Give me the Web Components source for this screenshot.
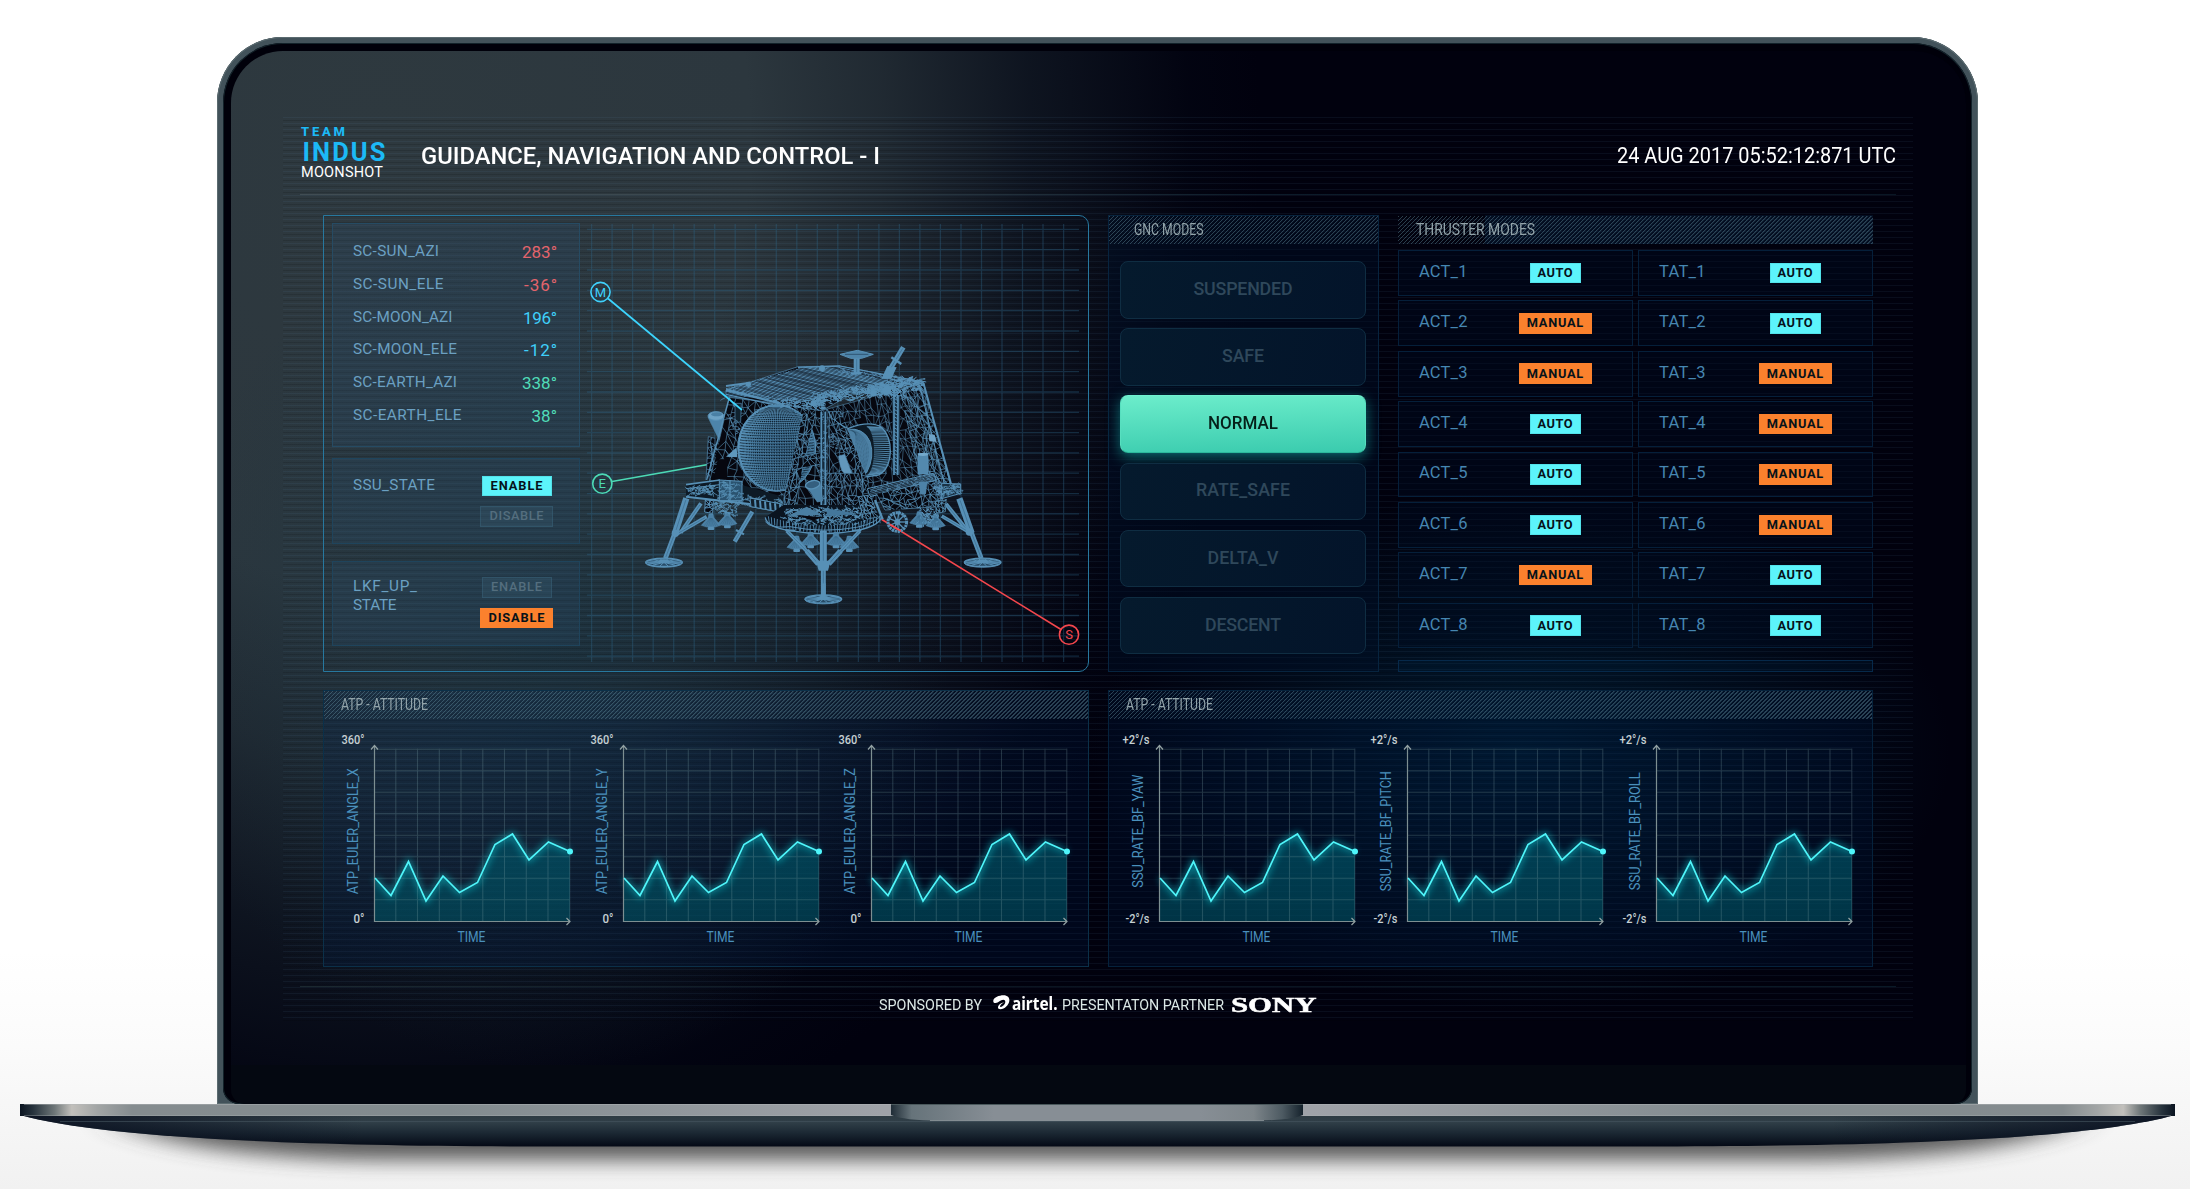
<!DOCTYPE html>
<html lang="en">
<head>
<meta charset="utf-8">
<title>Team Indus Moonshot - GNC</title>
<style>
  html, body { margin: 0; padding: 0; }
  body { width: 2190px; height: 1189px; overflow: hidden; font-family: Roboto, "Liberation Sans", sans-serif; background: linear-gradient(#fff 0 80%, #fbfbfb 88%, #f6f6f6 94%, #f1f1f1 100%); }
</style>
</head>
<body>
<laptop-mockup><gnc-dashboard></gnc-dashboard></laptop-mockup>
<script>
const define = (name, html, setup) => {
  customElements.define(name, class extends HTMLElement {
    constructor() { super(); this.attachShadow({ mode: 'open' }); }
    connectedCallback() {
      if (this.ready) return;
      this.ready = true;
      this.shadowRoot.innerHTML = typeof html === 'function' ? html(this) : html;
      if (setup) setup(this);
    }
  });
};

/* Text run stretched to an exact length: attribute w is the length in px. */
const runs = new Set();
define('fit-text', el => `<style>
  :host { display: inline-block; white-space: nowrap; width: ${el.getAttribute('w')}px; flex: none; }
  span { display: inline-block; transform-origin: 0 50%; }
</style><span><slot></slot></span>`, el => runs.add(el));
const fitAll = () => runs.forEach(el => {
  const span = el.shadowRoot.querySelector('span');
  const want = +el.getAttribute('w'), have = span.getBoundingClientRect().width;
  const n = el.textContent.trim().length;
  if (want / have < 0.97) span.style.transform = `scaleX(${want / have})`;
  else span.style.letterSpacing = (want - have) / (n - 1) + 'px';
});

/* ---------- laptop body ---------- */
define('laptop-mockup', `<style>
  :host { display: flex; flex-direction: column; width: 2190px; height: 1189px; box-sizing: border-box; padding-top: 37px; }
  .lid { flex: none; width: 1761px; height: 1067px; margin-left: 217px; box-sizing: border-box; padding: 6px 6px 0;
    border-radius: 66px 66px 0 0; background: #42525a; box-shadow: inset 0 0 0 1px #5b6b70, inset 0 0 0 5px #42525a; display: flex; }
  .bezel { flex: 1; box-sizing: border-box; display: flex; flex-direction: column; padding: 8px 6px 0 8px; background: #00000a;
    border-radius: 60px 60px 16px 16px; box-shadow: inset 0 0 0 1px #12222a; overflow: hidden; }
  .glass { height: 1014px; border-radius: 52px 52px 0 0; overflow: hidden; display: flex; }
  .chin { flex: 1; background: #040811; border-radius: 0 0 14px 14px; }
  svg { display: block; flex: none; }
</style>
<div class="lid"><div class="bezel"><div class="glass"><slot></slot></div><div class="chin"></div></div></div>
<svg width="2190" height="85" viewBox="0 1104 2190 85">
  <defs>
    <linearGradient id="bar" x1="20" x2="2175" y1="0" y2="0" gradientUnits="userSpaceOnUse">
      <stop offset="0" stop-color="#0a1420"/><stop offset=".006" stop-color="#26323c"/><stop offset=".016" stop-color="#6e7678"/>
      <stop offset=".024" stop-color="#c2c0bc"/><stop offset=".036" stop-color="#a2a5a5"/><stop offset=".052" stop-color="#858c8f"/>
      <stop offset=".2" stop-color="#828b8f"/><stop offset=".4" stop-color="#9fa2a8"/><stop offset=".6" stop-color="#9fa2a8"/>
      <stop offset=".8" stop-color="#828b8f"/><stop offset=".948" stop-color="#858c8f"/><stop offset=".964" stop-color="#a2a5a5"/>
      <stop offset=".976" stop-color="#c2c0bc"/><stop offset=".984" stop-color="#6e7678"/><stop offset=".994" stop-color="#26323c"/><stop offset="1" stop-color="#0a1420"/>
    </linearGradient>
    <linearGradient id="under" x1="0" x2="0" y1="1116" y2="1147" gradientUnits="userSpaceOnUse">
      <stop offset="0" stop-color="#2e3b43"/><stop offset=".2" stop-color="#303f48"/><stop offset=".55" stop-color="#1b2833"/><stop offset="1" stop-color="#030814"/>
    </linearGradient>
    <linearGradient id="ends" x1="20" x2="2175" y1="0" y2="0" gradientUnits="userSpaceOnUse">
      <stop offset="0" stop-color="#060c1c" stop-opacity=".85"/><stop offset=".16" stop-color="#060c1c" stop-opacity="0"/>
      <stop offset=".84" stop-color="#060c1c" stop-opacity="0"/><stop offset="1" stop-color="#060c1c" stop-opacity=".85"/>
    </linearGradient>
    <linearGradient id="notch"><stop offset="0" stop-color="#1f2c36"/><stop offset=".05" stop-color="#66737a"/><stop offset=".25" stop-color="#878e95"/>
      <stop offset=".75" stop-color="#878e95"/><stop offset=".88" stop-color="#7d858a"/><stop offset=".95" stop-color="#4d5a62"/><stop offset="1" stop-color="#15222c"/></linearGradient>
    <filter id="soft" x="-10%" width="120%" y="-100%" height="300%"><feGaussianBlur stdDeviation="20 10"/></filter>
  </defs>
  <path d="M110 1118 H2085 Q2010 1157 1820 1160 H375 Q180 1157 110 1118Z" fill="#4a4a4a" opacity=".9" filter="url(#soft)"/>
  <path d="M20 1115 H2175 C2100 1136 1930 1146.500 1640 1146.500 H550 C270 1146.500 95 1136 20 1115Z" fill="url(#under)"/>
  <path d="M20 1115 H2175 C2100 1136 1930 1146.500 1640 1146.500 H550 C270 1146.500 95 1136 20 1115Z" fill="url(#ends)"/>
  <path d="M60 1121.500H2135" stroke="#465660" stroke-width="1" opacity=".6"/>
  <rect x="20" y="1104" width="2155" height="12" fill="url(#bar)"/>
  <path d="M24 1104.500H2171" stroke="#b4b8ba" opacity=".45"/><path d="M24 1115.500H2171" stroke="#aeb4b6" opacity=".35"/>
  <path d="M891 1104 H1303 V1115 Q1290 1120.500 1255 1120.500 H939 Q904 1120.500 891 1115Z" fill="url(#notch)"/>
  <path d="M930 1120.500H1264" stroke="#a5adb0" opacity=".6"/><path d="M891 1104.500H1303" stroke="#4a585c"/>
</svg>`);

/* ---------- dashboard shell ---------- */
define('gnc-dashboard', `<style>
  :host { position: relative; isolation: isolate; display: flex; flex-direction: column; width: 1735px; height: 1014px; box-sizing: border-box; padding: 66px 70px 0 69px; color: #fff;
    background:
      radial-gradient(400px 430px at 320px 590px, rgba(18,52,70,.42), rgba(16,54,72,0)),
      radial-gradient(430px 260px at 1290px 700px, rgba(0,46,72,.55), rgba(0,30,50,0)),
      radial-gradient(880px 1070px at 150px 90px, #2e393f 0, #2c373e 42%, rgba(35,45,53,.92) 57%, rgba(20,29,40,.68) 74%, rgba(5,11,25,.26) 92%, rgba(0,0,12,0) 100%),
      #01010e; }
  .rule { height: 1px; background: linear-gradient(90deg, #414d53, #3a474e 25%, #0d1c2a 60%, #0a1724); }
  header { height: 77px; display: flex; align-items: center; }
  .title { font-size: 24.500px; font-weight: 500; flex: 1; padding-left: .5px; }
  .date { font-size: 21.500px; }
  main { display: grid; grid-template: 457px 277px / 765.500px 765px; gap: 18px 19px; padding: 20px 24px 0 23px; }
  .pair { display: flex; gap: 19px; }
  gnc-modes { width: 271px; } thruster-modes { flex: 1; }
  .rule.low { margin-top: 19px; background: linear-gradient(90deg, #1c2930, #132029 20%, #0a1420 50%, #0a1a27); }
  .scan { position: absolute; z-index: -1; left: 52px; top: 66px; width: 1630px; height: 905px; pointer-events: none;
    background: repeating-linear-gradient(180deg, rgba(90,140,180,.085) 0 1px, transparent 1px 3px, rgba(0,0,0,.13) 3px 4px, transparent 4px 6px); }
</style>
<div class="scan"></div>
<header><team-logo></team-logo><div class="title"><fit-text w="459">GUIDANCE, NAVIGATION AND CONTROL - I</fit-text></div>
<div class="date"><fit-text w="279">24 AUG 2017 05:52:12:871 UTC</fit-text></div></header>
<div class="rule"></div>
<main>
  <attitude-view></attitude-view>
  <div class="pair"><gnc-modes></gnc-modes><thruster-modes></thruster-modes></div>
  <chart-panel data-kind="euler"></chart-panel>
  <chart-panel data-kind="rate"></chart-panel>
</main>
<div class="rule low"></div>
<sponsor-bar></sponsor-bar>`);

define('team-logo', `<style>
  :host { display: flex; flex-direction: column; align-self: flex-start; width: 120px; margin-top: 6px; padding-left: 1px; box-sizing: border-box; color: #1cb9f6; }
  .a { font: 800 13px/17px Roboto, sans-serif; height: 18px; } .b { font: 700 25.500px/22px Roboto, sans-serif; padding-left: 1.500px; height: 22px; } .c { font: 400 14.500px/20px Roboto, sans-serif; color: #fff; height: 20px; }
</style><div class="a"><fit-text w="44">TEAM</fit-text></div><div class="b"><fit-text w="83">INDUS</fit-text></div><div class="c"><fit-text w="82">MOONSHOT</fit-text></div>`);

/* ---------- shared parts ---------- */
define('state-badge', el => `<style>
  :host { display: inline-flex; align-items: center; justify-content: center; box-sizing: border-box; height: 20.500px; width: ${el.dataset.w}px; font-size: 12.800px; font-weight: 700; line-height: 20px; color: #06121a; flex: none; }
  :host([tone=cyan]) { background: #5cf4fb; box-shadow: inset 0 0 0 1px #52e2ea; }
  :host([tone=orange]) { background: #fb812d; }
  :host([tone=off]) { background: rgba(60,100,125,.26); box-shadow: inset 0 0 0 1px rgba(60,105,130,.4); color: #546e7e; font-weight: 500; }
</style><fit-text w="${el.dataset.t}">${el.textContent}</fit-text>`);

define('panel-title', `<style>
  :host { display: flex; align-items: center; height: 28px; box-sizing: border-box; font-size: 16px; line-height: 28px; color: #93a4aa;
    background: repeating-linear-gradient(135deg, rgba(100,145,160,.42) 0 1.100px, transparent 1.400px 2.830px); }
</style><slot></slot>`);

/* ---------- attitude / lander ---------- */
const readings = [['SC-SUN_AZI', 86, '283°', 35, '#e4646c'], ['SC-SUN_ELE', 90.5, '-36°', 33, '#e4646c'], ['SC-MOON_AZI', 99.5, '196°', 34, '#3fd0fb'],
  ['SC-MOON_ELE', 104, '-12°', 33, '#3fd0fb'], ['SC-EARTH_AZI', 104, '338°', 35, '#50dcb8'], ['SC-EARTH_ELE', 108.5, '38°', 25.5, '#50dcb8']];
define('attitude-view', `<style>
  :host { display: flex; box-sizing: border-box; border: 1px solid #27789f; border-radius: 0 10px 10px 0; width: 765.500px; height: 457px; padding: 7px 0 0 8px; }
  .side { width: 248px; display: flex; flex-direction: column; color: #6ba0c2; font-size: 15.300px; flex: none; }
  .card { box-sizing: border-box; border: 1px solid #264b63; background: rgba(44,76,108,.26); }
  .read { height: 224px; padding: 11px 22px 0 20px; }
  .row { height: 32.800px; line-height: 32.800px; display: flex; justify-content: space-between; }
  .val { font-size: 17px; line-height: 34px; }
  .state { height: 86px; padding: 16px 0 0 20px; display: flex; border-color: #1f445c; line-height: 19.300px; }
  .state + .state { margin-top: 17px; height: 85px; padding-top: 15px; }
  .read + .state { margin-top: 11px; padding-top: 16.500px; }
  .lbl { width: 123.500px; display: flex; flex-direction: column; }
  .opts { width: 80px; display: flex; flex-direction: column; gap: 10px; align-items: center; }
</style>
<div class="side">
  <div class="card read">${readings.map(r => `<div class="row"><fit-text w="${r[1]}">${r[0]}</fit-text><fit-text class="val" w="${r[3]}" style="color:${r[4]}">${r[2]}</fit-text></div>`).join('')}</div>
  <div class="card state"><div class="lbl"><fit-text w="82">SSU_STATE</fit-text></div><div class="opts"><state-badge tone="cyan" data-w="70" data-t="52">ENABLE</state-badge><state-badge tone="off" data-w="73" data-t="54">DISABLE</state-badge></div></div>
  <div class="card state"><div class="lbl"><fit-text w="64">LKF_UP_</fit-text><fit-text w="43.500">STATE</fit-text></div><div class="opts"><state-badge tone="off" data-w="70" data-t="51">ENABLE</state-badge><state-badge tone="orange" data-w="73" data-t="56">DISABLE</state-badge></div></div>
</div>
<lander-scene></lander-scene>`);

function landerMarkup() {
  let seed = 11;
  const rnd = () => (seed = (seed * 16807) % 2147483647) / 2147483647;
  const f = n => n.toFixed(1);
  const C = '#5790b6', D = '#06070f';
  let out = '';
  const poly = (pts, fill = D, stroke = 'none', sw = 1, extra = '') => out += `<polygon points="${pts.map(p => p.join()).join(' ')}" fill="${fill}" stroke="${stroke}" stroke-width="${sw}" ${extra}/>`;
  const line = (a, b, w = 3, c = C) => out += `<path d="M${f(a[0])} ${f(a[1])}L${f(b[0])} ${f(b[1])}" stroke="${c}" stroke-width="${w}"/>`;
  const lerp = (a, b, t) => [a[0] + (b[0] - a[0]) * t, a[1] + (b[1] - a[1]) * t];
  /* triangulated quad a-b-c-d, clockwise from top left */
  const mesh = (a, b, c, d, nu, nv, w = 2, keep = .85, fill = D) => {
    if (fill) poly([a, b, c, d], fill);
    const P = [];
    for (let j = 0; j <= nv; j++) { P[j] = []; for (let i = 0; i <= nu; i++) {
      const p = lerp(lerp(a, b, i / nu), lerp(d, c, i / nu), j / nv);
      const inner = i && j && i < nu && j < nv ? 1 : 0;
      P[j][i] = [p[0] + (rnd() - .5) * 9 * inner, p[1] + (rnd() - .5) * 14 * inner]; } }
    let dd = '';
    const seg = (p, q) => { if (rnd() < keep) dd += `M${f(p[0])} ${f(p[1])}L${f(q[0])} ${f(q[1])}`; };
    for (let j = 0; j <= nv; j++) for (let i = 0; i <= nu; i++) {
      if (i < nu) seg(P[j][i], P[j][i + 1]);
      if (j < nv) seg(P[j][i], P[j + 1][i]);
      if (i < nu && j < nv) { rnd() < .6 ? seg(P[j][i], P[j + 1][i + 1]) : seg(P[j][i + 1], P[j + 1][i]); if (rnd() < .22) seg(P[j][i], [P[j+1][i+1][0] - 5, P[j+1][i+1][1]]); }
    }
    out += `<path d="${dd}" stroke="${C}" stroke-width="${w}" fill="none"/>`;
  };
  const fuzz = (a, b, spread, n, w = 2) => { let dd = '';
    for (let i = 0; i < n; i++) { const p = lerp(a, b, rnd()); const x = p[0], y = p[1] + (rnd() - .5) * spread; dd += `M${f(x)} ${f(y)}l${f((rnd() - .5) * 26)} ${f((rnd() - .5) * 12)}l${f((rnd() - .5) * 14)} ${f((rnd() - .5) * 12)}`; }
    out += `<path d="${dd}" stroke="${C}" stroke-width="${w}" fill="none"/>`; };
  const tube = (a, b, w) => { line(a, b, w); line(lerp(a, b, .05), lerp(a, b, .95), 1.5, '#2f5e80'); };
  const joint = (x, y, r = 7) => out += `<circle cx="${x}" cy="${y}" r="${r}" fill="${C}"/>`;
  const foot = (x, y) => { out += `<ellipse cx="${x}" cy="${y}" rx="55" ry="12.500" fill="#274b66" stroke="${C}" stroke-width="4"/>`;
    for (let i = 0; i < 14; i++) { const t = i / 14 * 6.283; line([x, y], [x + 53 * Math.cos(t), y + 11 * Math.sin(t)], 3); }
    out += `<ellipse cx="${x}" cy="${y + 2}" rx="55" ry="12.500" fill="none" stroke="${C}" stroke-width="3"/><ellipse cx="${x}" cy="${y-3}" rx="18" ry="6" fill="${C}"/>`; };
  const nozzle = (x, y, s = 1) => { out += `<path d="M${x - 6 * s} ${y - 30 * s}h${12 * s}l${3 * s} ${12 * s}q${8 * s} ${8 * s} ${20 * s} ${22 * s}q${-29 * s} ${12 * s} ${-58 * s} 0q${12 * s} ${-14 * s} ${20 * s} ${-22 * s}z" fill="#4a7fa4" stroke="${C}" stroke-width="1.500"/><rect x="${x - 10 * s}" y="${y + 9 * s}" width="${20 * s}" height="${9 * s}" rx="3" fill="${C}"/>`;
    for (let k = -3; k <= 3; k++) line([x + k, y - 18 * s], [x + k * 7 * s, y + 6 * s], 1, '#2d5a7a'); };

  /* rear nozzles, booms and legs */
  nozzle(213, 552); nozzle(262, 547); nozzle(838, 545); nozzle(887, 553);
  tube([337, 515], [284, 605], 13); line([288, 570], [312, 583], 6);
  tube([183, 490], [122, 578], 12); tube([200, 530], [100, 588], 11);
  tube([139, 475], [105, 580], 19); tube([108, 570], [76, 655], 14); joint(106, 580, 11);
  tube([918, 492], [985, 575], 12); tube([905, 528], [990, 578], 11);
  tube([958, 475], [995, 580], 19); tube([992, 572], [1024, 655], 14); joint(988, 576, 11);
  foot(72, 667); foot(1028, 667);
  /* left sensor */
  poly([[204, 232], [250, 232], [246, 300], [238, 300]], '#4d84aa', C, 1.5);
  out += `<ellipse cx="228" cy="228" rx="24" ry="13" fill="#6da2c5" stroke="${C}" stroke-width="3"/><ellipse cx="230" cy="223" rx="17" ry="6" fill="#4a80a5"/>`;
  /* main hull */
  mesh([205, 290], [245, 300], [240, 430], [198, 420], 4, 8, 2);
  mesh([268, 172], [545, 212], [545, 505], [205, 440], 14, 12, 1.8, .75);
  mesh([545, 212], [850, 128], [936, 450], [545, 515], 19, 11, 1.6, .85);
  mesh([780, 150], [850, 128], [936, 450], [850, 460], 5, 10, 2.2, .95, null);
  line([268, 172], [200, 420], 4); line([850, 128], [938, 450], 6); line([838, 135], [915, 440], 3);
  poly([[285, 190], [304, 190], [302, 245], [285, 250]], '#10222f', C, 2);
  poly([[233, 358], [262, 358], [262, 420], [222, 416]], D);
  poly([[258, 350], [290, 322], [292, 352]], '#5f98bd');
  poly([[866, 282], [884, 284], [890, 306], [868, 304]], '#6ea2c6');
  /* propellant sphere */
  out += `<defs><radialGradient id="ball" cx=".62" cy=".55" r=".62"><stop offset="0" stop-color="#2e5776"/><stop offset=".62" stop-color="#3b6b8d"/><stop offset=".9" stop-color="#5089af"/><stop offset="1" stop-color="#5a94bb"/></radialGradient></defs>
    <ellipse cx="410" cy="324" rx="117" ry="130" fill="url(#ball)" stroke="${C}" stroke-width="3"/>`;
  let dots = '', lights = '';
  for (let j = -22; j <= 22; j++) for (let i = -21; i <= 21; i++) {
    const v = j / 22.5 * 1.5, u = i / 21.5 * 1.45;
    const x = 410 + 113 * Math.sin(u) * Math.cos(v * .8), y = 324 + 127 * Math.sin(v) + 6 * Math.cos(u);
    const r = 2.2 * Math.cos(u) * Math.cos(v) + .4;
    if (((x - 410) / 113) ** 2 + ((y - 324) / 127) ** 2 > .97) continue;
    dots += `M${f(x - r)} ${f(y)}h${f(2 * r)}`; lights += `M${f(x + r)} ${f(y + 2.2)}h${f(1.5 * r)}`;
  }
  out += `<path d="${dots}" stroke="#07121d" stroke-width="2.800"/><path d="${lights}" stroke="#6fa5c9" stroke-width="1.600"/>`;
  /* side drum with its dome */
  out += `<path d="M625 265Q690 240 725 262Q752 290 751 335Q748 390 715 405L650 415Z" fill="#0c1a26" stroke="${C}" stroke-width="4"/>`;
  for (let i = 0; i < 34; i++) { const t = -1.4 + i / 33 * 2.8; line([676 + 26 * Math.cos(t), 333 + 74 * Math.sin(t)], [718 + 32 * Math.cos(t), 331 + 70 * Math.sin(t)], 2.6); }
  out += `<path d="M622 268Q672 262 690 305Q705 350 680 398L650 405Z" fill="#4c80a4" stroke="${C}" stroke-width="3"/>`;
  for (let i = 1; i < 9; i++) out += `<path d="M${622 + i * 3} ${268 + i}Q${672 - i * 3} ${270 + i * 3} ${688 - i * 5} ${318}Q${695 - i * 5} 355 ${672 - i * 2} 398" fill="none" stroke="#1c3a52" stroke-width="1.200" stroke-dasharray="2 2"/>`;
  out += `<path d="M596 348L627 340L650 412Q620 412 606 392Q598 372 596 348Z" fill="#6297bb" stroke="${C}" stroke-width="2"/>`;
  /* frame straps over the sphere */
  mesh([488, 222], [526, 222], [462, 500], [428, 492], 3, 14, 2.2, .9);
  mesh([566, 215], [602, 215], [686, 425], [662, 470], 3, 13, 2.2, .9);
  mesh([560, 400], [655, 400], [680, 520], [560, 520], 7, 6, 2, .85);
  mesh([462, 356], [542, 338], [542, 372], [456, 390], 6, 2, 2.2);
  out += `<rect x="540" y="215" width="20" height="300" fill="#15293a"/>`;
  line([544, 215], [544, 520], 5); line([556, 215], [556, 515], 5); fuzz([550, 220], [550, 510], 12, 50, 2);
  line([568, 215], [568, 505], 2);
  poly([[757, 165], [781, 165], [778, 405], [758, 405]], '#1a3347'); line([762, 165], [762, 405], 5); line([774, 165], [773, 405], 5);
  for (let y = 175; y < 400; y += 11) line([762, y], [774, y + 7], 3);
  /* bracket clutter */
  fuzz([575, 300], [620, 330], 40, 24); fuzz([255, 200], [300, 300], 60, 20); fuzz([470, 300], [540, 300], 50, 18);
  poly([[498, 436], [540, 432], [548, 482], [532, 486]], '#4b80a4', C, 2);
  out += `<ellipse cx="518" cy="434" rx="22" ry="12" transform="rotate(-12 518 434)" fill="#345f7f" stroke="${C}" stroke-width="4"/>`;
  /* roof */
  poly([[258, 150], [474, 80], [600, 78], [850, 126], [640, 160], [545, 212], [420, 192], [258, 168]], '#0a0d16', C, 2);
  out += `<clipPath id="roof"><path d="M258 140L474 80L600 78L850 126L520 190L258 165Z"/></clipPath><g clip-path="url(#roof)">`;
  for (let i = 0; i < 42; i++) { const t = i / 42; const a = lerp([235, 152], [560, 62], t), b = lerp([430, 205], [870, 132], t); line(a, lerp(a, b, .8 + rnd() * .3), 1.2 + rnd() * 2.2); }
  out += `</g>`;
  line([258, 138], [330, 128], 6); line([258, 150], [420, 190], 7); line([258, 163], [400, 194], 4); fuzz([270, 150], [420, 185], 18, 34);
  fuzz([410, 188], [560, 195], 24, 130, 3); fuzz([520, 178], [850, 132], 34, 330, 3); fuzz([530, 172], [820, 120], 22, 150, 3); fuzz([690, 155], [800, 160], 24, 80, 3);
  line([474, 82], [600, 78], 4); line([600, 78], [850, 126], 3);
  joint(325, 133, 8); joint(546, 85, 9); joint(740, 152, 13); joint(700, 160, 9); joint(520, 190, 9); joint(808, 120, 6);
  fuzz([600, 95], [840, 125], 18, 70, 2);
  /* antenna and boom */
  poly([[600, 43], [652, 31], [700, 43], [665, 55], [632, 55]], '#4e84a9', C, 3); line([615, 43], [685, 43], 2, '#1f4059');
  tube([650, 55], [650, 100], 18); line([632, 100], [664, 100], 7);
  poly([[742, 78], [770, 82], [754, 116], [724, 116]], C); tube([752, 85], [790, 22], 15); line([754, 52], [784, 72], 7);
  /* deck */
  poly([[138, 434], [245, 418], [430, 470], [430, 515], [340, 505], [330, 490], [150, 470], [138, 470]], '#0d1a26');
  line([138, 434], [240, 420], 5); line([138, 446], [240, 434], 3); line([138, 470], [330, 492], 6); line([330, 474], [440, 500], 6); line([335, 500], [430, 518], 4);
  fuzz([145, 455], [230, 448], 26, 80, 2.4); fuzz([240, 475], [430, 495], 30, 120, 2.4);
  poly([[238, 420], [306, 424], [306, 482], [238, 482]], '#2b5370', C, 3); fuzz([244, 450], [300, 455], 50, 60, 2.4); line([270, 420], [270, 482], 4);
  poly([[330, 474], [425, 492], [430, 518], [333, 500]], '#111f2c', C, 3); for (let x = 345; x < 425; x += 15) line([x, 478 + (x - 340) * .18], [x + 2, 502 + (x - 340) * .18], 6);
  mesh([196, 480], [220, 482], [218, 520], [194, 516], 2, 3, 3);
  poly([[682, 446], [880, 400], [888, 420], [690, 470]], '#0a1018', C, 3); for (let i = 0; i < 5; i++) line([690, 450 + i * 5], [880, 403 + i * 4], 2); fuzz([690, 455], [880, 412], 18, 40, 2);
  mesh([710, 462], [880, 425], [900, 500], [735, 510], 10, 4, 2.2);
  poly([[905, 430], [962, 432], [962, 460], [905, 476]], '#1a3245', C, 3); fuzz([905, 450], [958, 446], 30, 60, 2.4);
  fuzz([880, 420], [910, 500], 40, 60);
  out += `<rect x="834" y="340" width="30" height="62" fill="#5389ae" stroke="${C}" stroke-width="2"/><path d="M836 425h26l-4 36q-9 6-18 0z" fill="#4d82a7"/><ellipse cx="849" cy="343" rx="15" ry="5" fill="#74a9cc"/>`;
  mesh([885, 485], [918, 480], [916, 515], [890, 520], 3, 3, 2.5);
  /* lower ring */
  poly([[430, 495], [690, 495], [725, 530], [722, 552], [640, 575], [550, 582], [450, 572], [378, 550], [376, 532]], '#0a1420');
  out += `<path d="M376 532Q378 560 450 572Q550 590 650 572Q722 556 724 530" fill="none" stroke="${C}" stroke-width="4"/><path d="M376 545Q390 566 450 560Q550 580 650 562Q716 548 724 520" fill="none" stroke="${C}" stroke-width="3"/>`;
  for (let x = 385; x < 720; x += 9) { const y = 582 - Math.abs(x - 550) ** 2 / 1000; line([x, y - 26], [x + (rnd() - .5) * 8, y - 4], 2.6); }
  fuzz([435, 525], [680, 522], 40, 260, 2.8); fuzz([440, 545], [660, 545], 20, 60, 2.4);
  poly([[470, 515], [500, 500], [545, 525], [440, 528]], '#4a7ea2'); poly([[560, 505], [655, 522], [560, 528]], '#44779b'); poly([[470, 525], [545, 532], [520, 542]], D);
  mesh([655, 470], [690, 465], [715, 530], [670, 540], 4, 5, 2.6);
  line([705, 480], [728, 538], 7);
  /* centre nozzles and leg */
  nozzle(470, 618); nozzle(512, 607); nozzle(588, 607); nozzle(628, 618);
  tube([440, 572], [505, 638], 11); tube([500, 632], [535, 672], 16); tube([660, 572], [598, 638], 11); tube([602, 632], [566, 672], 16);
  tube([550, 572], [550, 680], 21); tube([550, 672], [550, 768], 15); out += `<path d="M528 662L572 662L564 692L536 692Z" fill="${C}"/>`; line([436, 570], [466, 572], 6); line([636, 572], [664, 570], 6);
  foot(550, 777); line([550, 730], [550, 774], 14);
  /* wheel and thruster cluster */
  out += `<circle cx="772" cy="546" r="28" fill="none" stroke="${C}" stroke-width="9" stroke-dasharray="7 2"/>`; joint(772, 546, 9);
  for (let i = 0; i < 9; i++) { const t = i * .7; line([772, 546], [772 + 28 * Math.cos(t), 546 + 34 * Math.sin(t)], 4); }
  for (let i = 0; i < 70; i++) { const t = rnd() * 6.28, r = rnd() * 36; const x = 862 + r * Math.cos(t), y = 526 + r * Math.sin(t); line([x, y], [x + (rnd() - .5) * 20, y + (rnd() - .5) * 20], 3); }
  fuzz([225, 500], [290, 515], 30, 60, 2.4);
  return out;
}
define('lander-scene', () => {
  /* scene coordinates are page pixels; the viewBox starts at the scene's corner */
  let grid = '';
  for (let i = 0; i < 24; i++) grid += `M${(591.6 + i * 20.52).toFixed(1)} 224V662`;
  for (let i = 0; i < 22; i++) grid += `M587 ${(229.4 + i * 20.32).toFixed(1)}H1079`;
  const pin = (x, y, c, t) => `<circle cx="${x}" cy="${y}" r="9.600" fill="none" stroke="${c}" stroke-width="1.600"/><text x="${x}" y="${y + 4.600}" fill="${c}" text-anchor="middle">${t}</text>`;
  return `<style>:host { display: block; flex: none; } svg { display: block; } text { font: 400 13px Roboto, sans-serif; }</style>
  <svg width="506" height="446" viewBox="580 223 506 446" fill="none">
    <path d="${grid}" stroke="#2d6585" stroke-width="1.300" opacity=".38"/>
    <path d="M612 481.500L708 464.500" stroke="#4cdab5" stroke-width="1.600"/>
    <path d="M881 519L1061 629.500" stroke="#f4474d" stroke-width="1.600"/>
    <svg x="640" y="340" width="380" height="280" viewBox="0 0 1140 840" fill="none">${landerMarkup()}</svg>
    <path d="M608 298.500L742 410" stroke="#3cd4fd" stroke-width="1.700"/>
    <path d="M890 524.500L901 531" stroke="#f4474d" stroke-width="1.500"/>
    ${pin(600.5, 292, '#3fd0fb', 'M')}${pin(602.3, 483.7, '#4cdab5', 'E')}${pin(1069, 634.7, '#f4474d', 'S')}
  </svg>`;
});

/* ---------- GNC modes ---------- */
define('gnc-modes', `<style>
  :host { display: flex; flex-direction: column; box-sizing: border-box; height: 457px; border: 1px solid #07243f; background: rgba(0,16,40,.45); }
  panel-title { padding-left: 25.500px; }
  .list { display: flex; flex-direction: column; gap: 9.700px; padding: 17px 11.500px 0; }
  .mode { height: 57.500px; box-sizing: border-box; border: 1px solid #0f2d42; border-radius: 8px; background: linear-gradient(100deg, #051a2d, #03142a); display: flex; align-items: center; justify-content: center; font-size: 17.800px; font-weight: 500; color: #2f485b; line-height: 24px; padding-bottom: 2px; }
  .on { color: #052019; border-color: #70f3d0 #57dfbf #2cb99c; background: linear-gradient(178deg, #6cedcb, #3acbae); box-shadow: 0 4px 14px rgba(18,170,165,.6); }
</style><panel-title><fit-text w="69.500">GNC MODES</fit-text></panel-title>
<div class="list">${[['SUSPENDED', 99], ['SAFE', 42], ['NORMAL', 70], ['RATE_SAFE', 94], ['DELTA_V', 71], ['DESCENT', 76]].map(m => `<div class="mode ${m[0] === 'NORMAL' ? 'on' : ''}"><fit-text w="${m[1]}">${m[0]}</fit-text></div>`).join('')}</div>`);

/* ---------- thruster modes ---------- */
const cell = (name, auto) => `<div class="cell"><fit-text w="${name[0] === 'A' ? 48.5 : 46.5}">${name}</fit-text><div class="slot">${auto ? '<state-badge tone="cyan" data-w="51" data-t="35">AUTO</state-badge>' : '<state-badge tone="orange" data-w="73" data-t="56.500">MANUAL</state-badge>'}</div></div>`;
define('thruster-modes', `<style>
  :host { display: flex; flex-direction: column; height: 457px; }
  .head { display: flex; height: 29px; padding-top: 1px; box-sizing: border-box; margin-bottom: 6px; background: linear-gradient(90deg, transparent 86.500px, rgba(6,40,76,.3) 86.500px); }
  panel-title { flex: 1; padding-left: 18px; background-color: transparent; }
  .grid { display: grid; grid-template-columns: 235px 235px; grid-auto-rows: 45.800px; gap: 4.580px 5px; }
  .cell { display: flex; align-items: center; box-sizing: border-box; border: 1px solid #051f3a; background: rgba(0,12,34,.4); padding-left: 20.500px; font-size: 16.500px; line-height: 20px; color: #4686b1; }
  .cell fit-text { margin-bottom: 2px; }
  .cell fit-text + .slot { margin-left: auto; width: 80px; margin-right: 36.500px; display: flex; justify-content: center; }
  .foot { margin-top: auto; height: 12px; box-sizing: border-box; border: 1px solid #06294a; background: rgba(0,30,60,.25); }
</style><div class="head"><panel-title><fit-text w="119">THRUSTER MODES</fit-text></panel-title></div>
<div class="grid">${[[1, 1], [0, 1], [0, 0], [1, 0], [1, 0], [1, 0], [0, 1], [1, 1]].map((r, i) => cell('ACT_' + (i + 1), r[0]) + cell('TAT_' + (i + 1), r[1])).join('')}</div><div class="foot"></div>`);

/* ---------- charts ---------- */
const series = [[52, 160], [68, 177.5], [85.5, 143.5], [103, 183], [120, 158], [136.5, 174.5], [154.5, 164.5], [172, 126.5], [189.5, 116], [206, 142], [225.5, 124], [247, 133.5]];
define('line-chart', el => {
  const { hi, hw, lo, lw, name, len } = el.dataset;
  const pts = series.map(p => p.join(' ')).join('L');
  let g = '';
  for (let i = 1; i < 10; i++) g += `M${(51 + i * 21.75).toFixed(1)} 30.500V203`;
  for (let i = 0; i < 8; i++) g += `M51 ${(31.2 + i * 21.5).toFixed(1)}H247`;
  return `<style>:host { display: block; width: 248.700px; flex: none; } svg { display: block; overflow: visible; } text { font: 400 13.800px Roboto, sans-serif; fill: #4a90bc; } .t { font: 500 12.500px Roboto, sans-serif; fill: #c6d0d3; }</style>
  <svg width="248.700" height="246" viewBox="0 1 248.700 246" fill="none">
    <defs><filter id="glow" x="-20%" y="-30%" width="140%" height="160%"><feGaussianBlur stdDeviation="3.500"/></filter>
    <linearGradient id="area" x1="0" y1="0" x2="0" y2="1"><stop offset="0" stop-color="#00566a" stop-opacity=".68"/><stop offset="1" stop-color="#005060" stop-opacity=".62"/></linearGradient></defs>
    <path d="M51 203L51 160L${pts}V203Z" fill="url(#area)"/>
    <path d="${g}" stroke="#7fa3a6" stroke-opacity=".27" stroke-width="1.100"/>
    <path d="M${pts}" stroke="#14d0da" stroke-width="4" opacity=".6" filter="url(#glow)"/>
    <path d="M51.500 28V203.500H247" stroke="#7d8f91" stroke-width="1.200"/>
    <path d="M48 31.500L51.500 27.500L55 31.500M243.500 200L247 203.500L243.500 207" stroke="#93a2a3" stroke-width="1.200"/>
    <path d="M${pts}" stroke="#4ff5fa" stroke-width="1.700"/><circle cx="247" cy="133.500" r="3" fill="#4ff5fa"/>
    <text class="t" x="${41.5 - hw}" y="26" textLength="${hw}" lengthAdjust="spacingAndGlyphs">${hi}</text>
    <text class="t" x="${41.5 - lw}" y="205.500" textLength="${lw}" lengthAdjust="spacingAndGlyphs">${lo}</text>
    <text x="134.500" y="224" textLength="28" lengthAdjust="spacingAndGlyphs">TIME</text>
    <text transform="translate(34.800 ${113.2 + len / 2}) rotate(-90)" textLength="${len}" lengthAdjust="spacingAndGlyphs">${name}</text>
  </svg>`;
});
define('chart-panel', el => {
  const euler = el.dataset.kind === 'euler';
  const rows = euler ? [['ATP_EULER_ANGLE_X', 126], ['ATP_EULER_ANGLE_Y', 126], ['ATP_EULER_ANGLE_Z', 126]] : [['SSU_RATE_BF_YAW', 113], ['SSU_RATE_BF_PITCH', 120], ['SSU_RATE_BF_ROLL', 118]];
  return `<style>
  :host { display: flex; flex-direction: column; box-sizing: border-box; height: 277px; border: 1px solid ${euler ? '#0b3049' : '#05223c'}; background: rgba(${euler ? '0,36,84,.2' : '0,24,58,.3'}); }
  panel-title { padding-left: 17px; } .row { display: flex; margin-left: -1px; }
  </style><panel-title><fit-text w="87">ATP - ATTITUDE</fit-text></panel-title>
  <div class="row">${rows.map(r => `<line-chart data-name="${r[0]}" data-len="${r[1]}" ${euler ? 'data-hi="360°" data-hw="23" data-lo="0°" data-lw="11"' : 'data-hi="+2°/s" data-hw="27" data-lo="-2°/s" data-lw="24"'}></line-chart>`).join('')}</div>`;
});

/* ---------- sponsors ---------- */
define('sponsor-bar', `<style>
  :host { display: flex; align-items: center; height: 36px; padding-left: 579px; font-size: 14.800px; line-height: 20px; color: #dce8e6; }
  svg { width: 17px; height: 16px; margin: 0 2px 4px 11px; flex: none; } .air { font: 700 18.500px/20px "Noto Sans", sans-serif; color: #fff; margin: 0 4px 4px 0; }
  .sony { font: 700 20.500px/20px "Liberation Serif", serif; color: #fff; margin-left: 7px; -webkit-text-stroke: .5px #fff; }
  .wide { display: inline-block; transform: scaleX(1.500); transform-origin: 0 50%; }
</style><fit-text w="103">SPONSORED BY</fit-text>
<svg viewBox="0 0 17 16"><path d="M.3 5.500C1 2.500 6 .3 10.500.3C14.500.3 16.600 2.600 16.400 5.500C16 10 11.500 14.300 7.500 14.300C5.300 14.300 4.500 12.800 5.200 11.200C6 9.300 9 7.400 11.500 7.300C9.500 8.200 7 10 7 11.200C7 12.800 9.600 11.800 11.300 9.600C12.900 7.500 12.700 4.600 10.200 4.700C7.600 4.800 5.500 7.800 2.600 8.100C1 8.200 0 7.100.3 5.500Z" fill="#fff"/></svg>
<fit-text class="air" w="45.500">airtel.</fit-text><fit-text w="162">PRESENTATON PARTNER</fit-text><span class="sony"><span class="wide">SONY</span></span>`);

fitAll();
</script>
</body>
</html>
